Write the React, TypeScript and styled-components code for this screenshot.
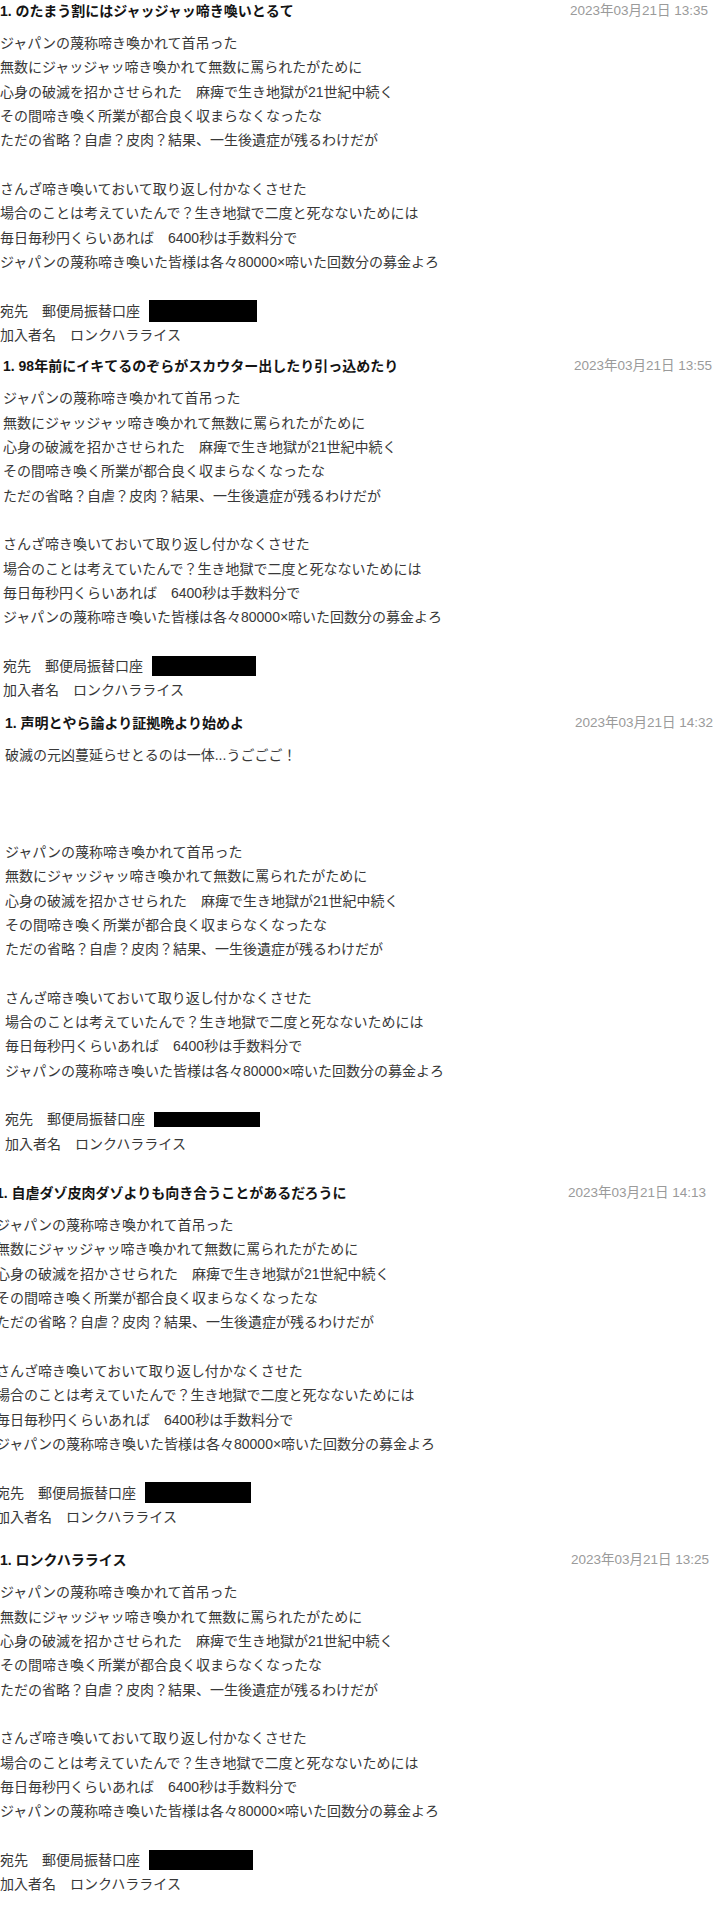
import React from "react";
import styled, { createGlobalStyle } from "styled-components";

const GlobalStyle = createGlobalStyle`
  html, body {
    margin: 0;
    padding: 0;
    background: #ffffff;
    overflow-x: hidden;
  }
  body {
    font-family: "Liberation Sans", "Noto Sans CJK JP", sans-serif;
    -webkit-font-smoothing: antialiased;
  }
`;

const LINE = 24.33;

const Page = styled.main`
  display: flex;
  flex-direction: column;
  width: 720px;
`;

const Post = styled.article<{ $shift: number; $trim: number; $after: number }>`
  display: flex;
  flex-direction: column;
  margin-left: ${(p) => p.$shift}px;
  margin-right: ${(p) => p.$trim}px;
  margin-bottom: ${(p) => p.$after}px;
`;

const PostHeader = styled.header`
  display: flex;
  align-items: center;
  justify-content: space-between;
  height: 22px;
`;

const Title = styled.h3`
  margin: 0;
  font-size: 14px;
  font-weight: 700;
  color: #141414;
  line-height: 22px;
  white-space: nowrap;
`;

const Stamp = styled.time`
  font-size: 13.5px;
  color: #9a9a9a;
  line-height: 22px;
  white-space: nowrap;
`;

const Body = styled.div`
  margin-top: 9px;
  display: flex;
  flex-direction: column;
  font-size: 14px;
  line-height: ${LINE}px;
  color: #383838;
`;

const Line = styled.p`
  margin: 0;
  min-height: ${LINE}px;
  white-space: nowrap;
  display: flex;
  align-items: center;
`;

const Redacted = styled.span<{ $w: number; $h: number }>`
  display: inline-block;
  width: ${(p) => p.$w}px;
  height: ${(p) => p.$h}px;
  margin-left: 9px;
  background: #000000;
`;

const CORE = [
  "ジャパンの蔑称啼き喚かれて首吊った",
  "無数にジャッジャッ啼き喚かれて無数に罵られたがために",
  "心身の破滅を招かさせられた　麻痺で生き地獄が21世紀中続く",
  "その間啼き喚く所業が都合良く収まらなくなったな",
  "ただの省略？自虐？皮肉？結果、一生後遺症が残るわけだが",
  "",
  "さんざ啼き喚いておいて取り返し付かなくさせた",
  "場合のことは考えていたんで？生き地獄で二度と死なないためには",
  "毎日毎秒円くらいあれば　6400秒は手数料分で",
  "ジャパンの蔑称啼き喚いた皆様は各々80000×啼いた回数分の募金よろ",
  "",
];

type PostData = {
  title: string;
  date: string;
  intro?: string[];
  shift: number;
  trim: number;
  after: number;
  boxW: number;
  boxH: number;
};

const POSTS: PostData[] = [
  {
    title: "1. のたまう割にはジャッジャッ啼き喚いとるて",
    date: "2023年03月21日 13:35",
    shift: 0,
    trim: 12,
    after: 8,
    boxW: 108,
    boxH: 22,
  },
  {
    title: "1. 98年前にイキてるのぞらがスカウター出したり引っ込めたり",
    date: "2023年03月21日 13:55",
    shift: 3,
    trim: 8,
    after: 9,
    boxW: 104,
    boxH: 20,
  },
  {
    title: "1. 声明とやら論より証拠晩より始めよ",
    date: "2023年03月21日 14:32",
    intro: ["破滅の元凶蔓延らせとるのは一体...うごごご！", "", "", ""],
    shift: 5,
    trim: 7,
    after: 26,
    boxW: 106,
    boxH: 15,
  },
  {
    title: "1. 自虐ダゾ皮肉ダゾよりも向き合うことがあるだろうに",
    date: "2023年03月21日 14:13",
    shift: -4,
    trim: 14,
    after: 20,
    boxW: 106,
    boxH: 21,
  },
  {
    title: "1. ロンクハラライス",
    date: "2023年03月21日 13:25",
    shift: 0,
    trim: 11,
    after: 0,
    boxW: 104,
    boxH: 20,
  },
];

function PostBlock({ post }: { post: PostData }) {
  const lines = [...(post.intro ?? []), ...CORE];
  return (
    <Post $shift={post.shift} $trim={post.trim} $after={post.after}>
      <PostHeader>
        <Title>{post.title}</Title>
        <Stamp>{post.date}</Stamp>
      </PostHeader>
      <Body>
        {lines.map((l, i) => (
          <Line key={i}>{l}</Line>
        ))}
        <Line>
          宛先　郵便局振替口座
          <Redacted $w={post.boxW} $h={post.boxH} />
        </Line>
        <Line>加入者名　ロンクハラライス</Line>
      </Body>
    </Post>
  );
}

export default function App() {
  return (
    <>
      <GlobalStyle />
      <Page>
        {POSTS.map((p, i) => (
          <PostBlock key={i} post={p} />
        ))}
      </Page>
    </>
  );
}
